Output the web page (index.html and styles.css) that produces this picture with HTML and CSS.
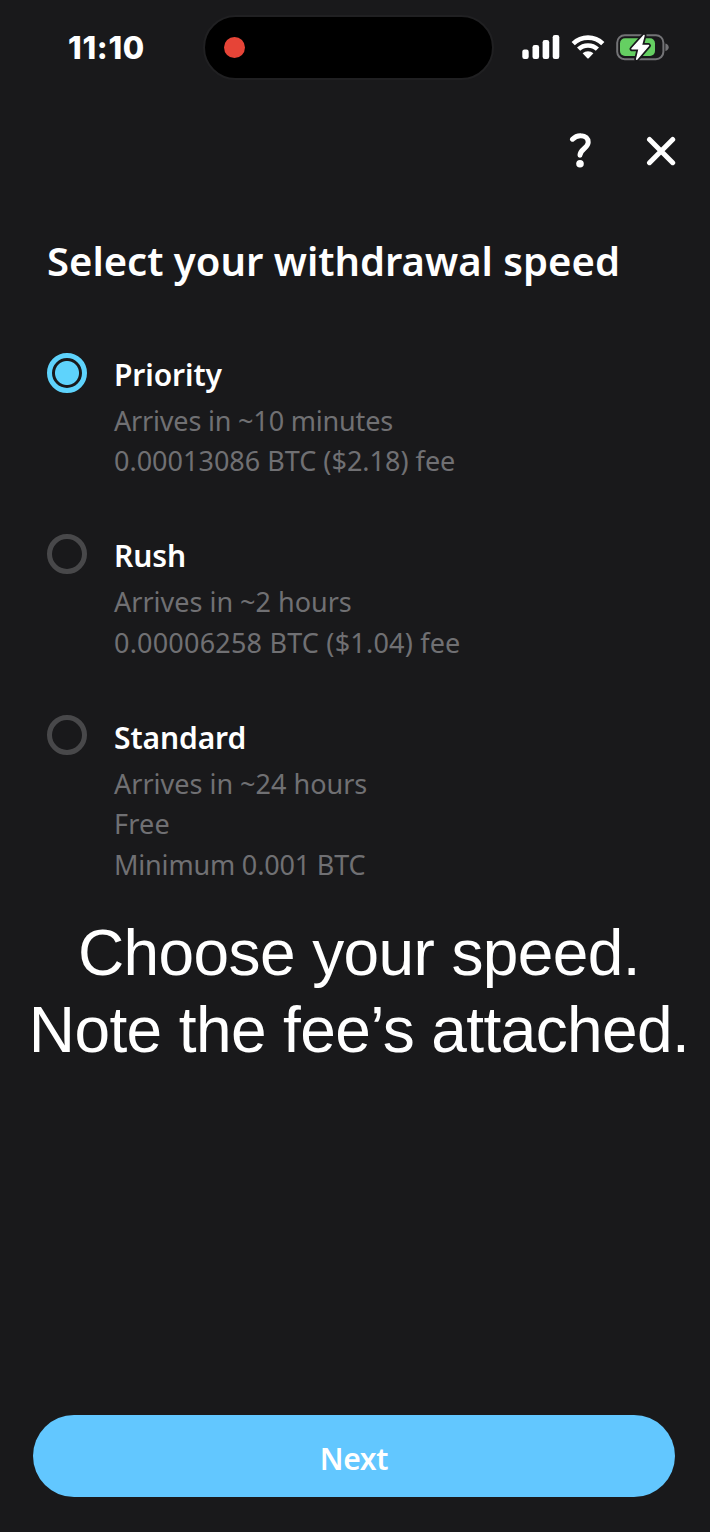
FILE: index.html
```html
<!DOCTYPE html>
<html lang="en">
  <head>
    <meta charset="UTF-8" />
    <meta name="viewport" content="width=device-width, initial-scale=1.0" />
    <title>Select your withdrawal speed</title>
    <link rel="stylesheet" href="styles.css">
  </head>
  <body>
    <div class="screen">
      <div class="status">
        <div class="time">11:10</div>
        <div class="island">
          <div class="recording"></div>
        </div>
        <div class="indicators">
          <svg class="signal" width="38" height="24" viewBox="0 0 38 24" fill="#fff">
            <rect x="0.3" y="14.5" width="6.4" height="9.5" rx="2.2" />
            <rect x="10.5" y="10" width="6.6" height="14" rx="2.2" />
            <rect x="20.6" y="5" width="6.6" height="19" rx="2.2" />
            <rect x="30.7" y="0" width="6.6" height="24" rx="2.2" />
          </svg>
          <svg class="wifi" width="34" height="26" viewBox="0 0 34 26">
            <g fill="none" stroke="#fff" stroke-width="4.6">
              <path d="M2.2 9.6a21.2 21.2 0 0 1 29.6 0" />
              <path d="M7.6 15.2a13.6 13.6 0 0 1 18.8 0" />
            </g>
            <path d="M11.6 19.3a7.8 7.8 0 0 1 10.8 0L17.7 24.2q-.7.6-1.4 0Z" fill="#fff" />
          </svg>
          <svg class="battery" width="54" height="30" viewBox="0 0 54 30">
            <rect x="1.2" y="3.2" width="46.2" height="24" rx="7.5" fill="none" stroke="#737376" stroke-width="2" />
            <path d="M49.4 11.4q3.3 1 3.3 3.8t-3.3 3.8Z" fill="#737376" />
            <rect x="4" y="6.2" width="35" height="17.8" rx="5" fill="#65cf62" />
            <path d="M28 3.5 16 16.8h7.2l-2.5 10.4L32.5 13.6h-7.2Z" fill="#fff" stroke="#19191b" stroke-width="5" stroke-linejoin="round" />
            <path d="M28 3.5 16 16.8h7.2l-2.5 10.4L32.5 13.6h-7.2Z" fill="#fff" stroke="#fff" stroke-width="1.5" stroke-linejoin="round" />
          </svg>
        </div>
      </div>

      <div class="actions">
        <svg class="help" width="24" height="36" viewBox="0 0 24 36">
          <path d="M3.5 6.2C6.2 3.4 9 2.5 12 2.7c4.5.2 7.2 2.9 7.2 6.5 0 6-7.9 6.5-8.2 13" fill="none" stroke="#fff" stroke-width="5" stroke-linecap="round" />
          <circle cx="11" cy="30.7" r="3.8" fill="#fff" />
        </svg>
        <svg class="close" width="30" height="30" viewBox="0 0 30 30">
          <path d="m3.5 3.5 23.2 23.2M26.7 3.5 3.5 26.7" stroke="#fff" stroke-width="5" stroke-linecap="round" />
        </svg>
      </div>

      <h1 class="heading">Select your withdrawal speed</h1>

      <div class="options">
        <div class="option">
          <div class="radio selected"></div>
          <div class="info">
            <div class="name">Priority</div>
            <div class="detail tight">Arrives in ~10 minutes</div>
            <div class="detail">0.00013086 BTC ($2.18) fee</div>
          </div>
        </div>
        <div class="option">
          <div class="radio"></div>
          <div class="info">
            <div class="name">Rush</div>
            <div class="detail">Arrives in ~2 hours</div>
            <div class="detail wide">0.00006258 BTC ($1.04) fee</div>
          </div>
        </div>
        <div class="option">
          <div class="radio"></div>
          <div class="info">
            <div class="name">Standard</div>
            <div class="detail">Arrives in ~24 hours</div>
            <div class="detail wide">Free</div>
            <div class="detail tight">Minimum 0.001 BTC</div>
          </div>
        </div>
      </div>

      <div class="caption">Choose your speed.<br>Note the fee’s attached.</div>

      <div class="next">Next</div>
    </div>
  </body>
</html>
```

FILE: styles.css
```css
* {
  box-sizing: border-box;
}

body {
  margin: 0;
  background-color: #19191b;
  color: #fff;
  font-family: "Noto Sans", sans-serif;
}

.screen {
  display: flex;
  flex-direction: column;
  width: 710px;
  height: 1532px;
  overflow: hidden;
}

.status {
  display: flex;
  height: 96px;
  padding-top: 15px;
}

.time {
  width: 203px;
  padding-left: 68px;
  font-family: Inter, sans-serif;
  font-size: 31px;
  font-weight: 800;
  letter-spacing: 0.7px;
  line-height: 65px;
}

.island {
  display: flex;
  align-items: center;
  width: 291px;
  height: 65px;
  padding-left: 19px;
  border: 2px solid #202022;
  border-radius: 33px;
  background-color: #000;
}

.recording {
  width: 21px;
  height: 21px;
  border-radius: 50%;
  background-color: #e64437;
}

.indicators {
  display: flex;
  align-items: center;
  height: 64px;
  padding-left: 28px;
}

.wifi {
  margin-left: 11px;
}

.battery {
  margin-left: 11px;
}

.actions {
  display: flex;
  justify-content: flex-end;
  align-items: center;
  height: 110px;
  padding-right: 34px;
}

.close {
  margin-left: 53px;
}

.heading {
  margin: 31px 0 0 47px;
  font-size: 40px;
  font-weight: 600;
  line-height: 48px;
  white-space: nowrap;
}

.options {
  display: flex;
  flex-direction: column;
  gap: 54.6px;
  margin-top: 70px;
  padding-left: 47px;
}

.option {
  display: flex;
  gap: 27px;
}

.radio {
  width: 40px;
  height: 40px;
  margin-top: -2.5px;
  border: 5px solid #48484a;
  border-radius: 50%;
}

.selected {
  border-color: #5ed3fc;
  background: radial-gradient(circle, #5ed3fc 11.5px, #19191b 12.5px);
}

.info {
  white-space: nowrap;
}

.name {
  height: 46px;
  font-size: 30px;
  font-weight: 600;
  letter-spacing: -0.1px;
  line-height: 40px;
}

.detail {
  height: 40.4px;
  color: #707073;
  font-size: 27px;
  line-height: 40px;
}

.tight {
  letter-spacing: -0.18px;
}

.wide {
  letter-spacing: 0.2px;
}

.caption {
  margin-top: 30px;
  padding-left: 8px;
  font-family: "Liberation Sans", sans-serif;
  font-size: 64px;
  letter-spacing: -0.6px;
  line-height: 77px;
  text-align: center;
  white-space: nowrap;
}

.next {
  height: 82px;
  margin: auto 35px 35px 33px;
  border-radius: 41px;
  background-color: #62c7ff;
  font-size: 30px;
  font-weight: 600;
  letter-spacing: -0.3px;
  line-height: 87px;
  text-align: center;
}
```
